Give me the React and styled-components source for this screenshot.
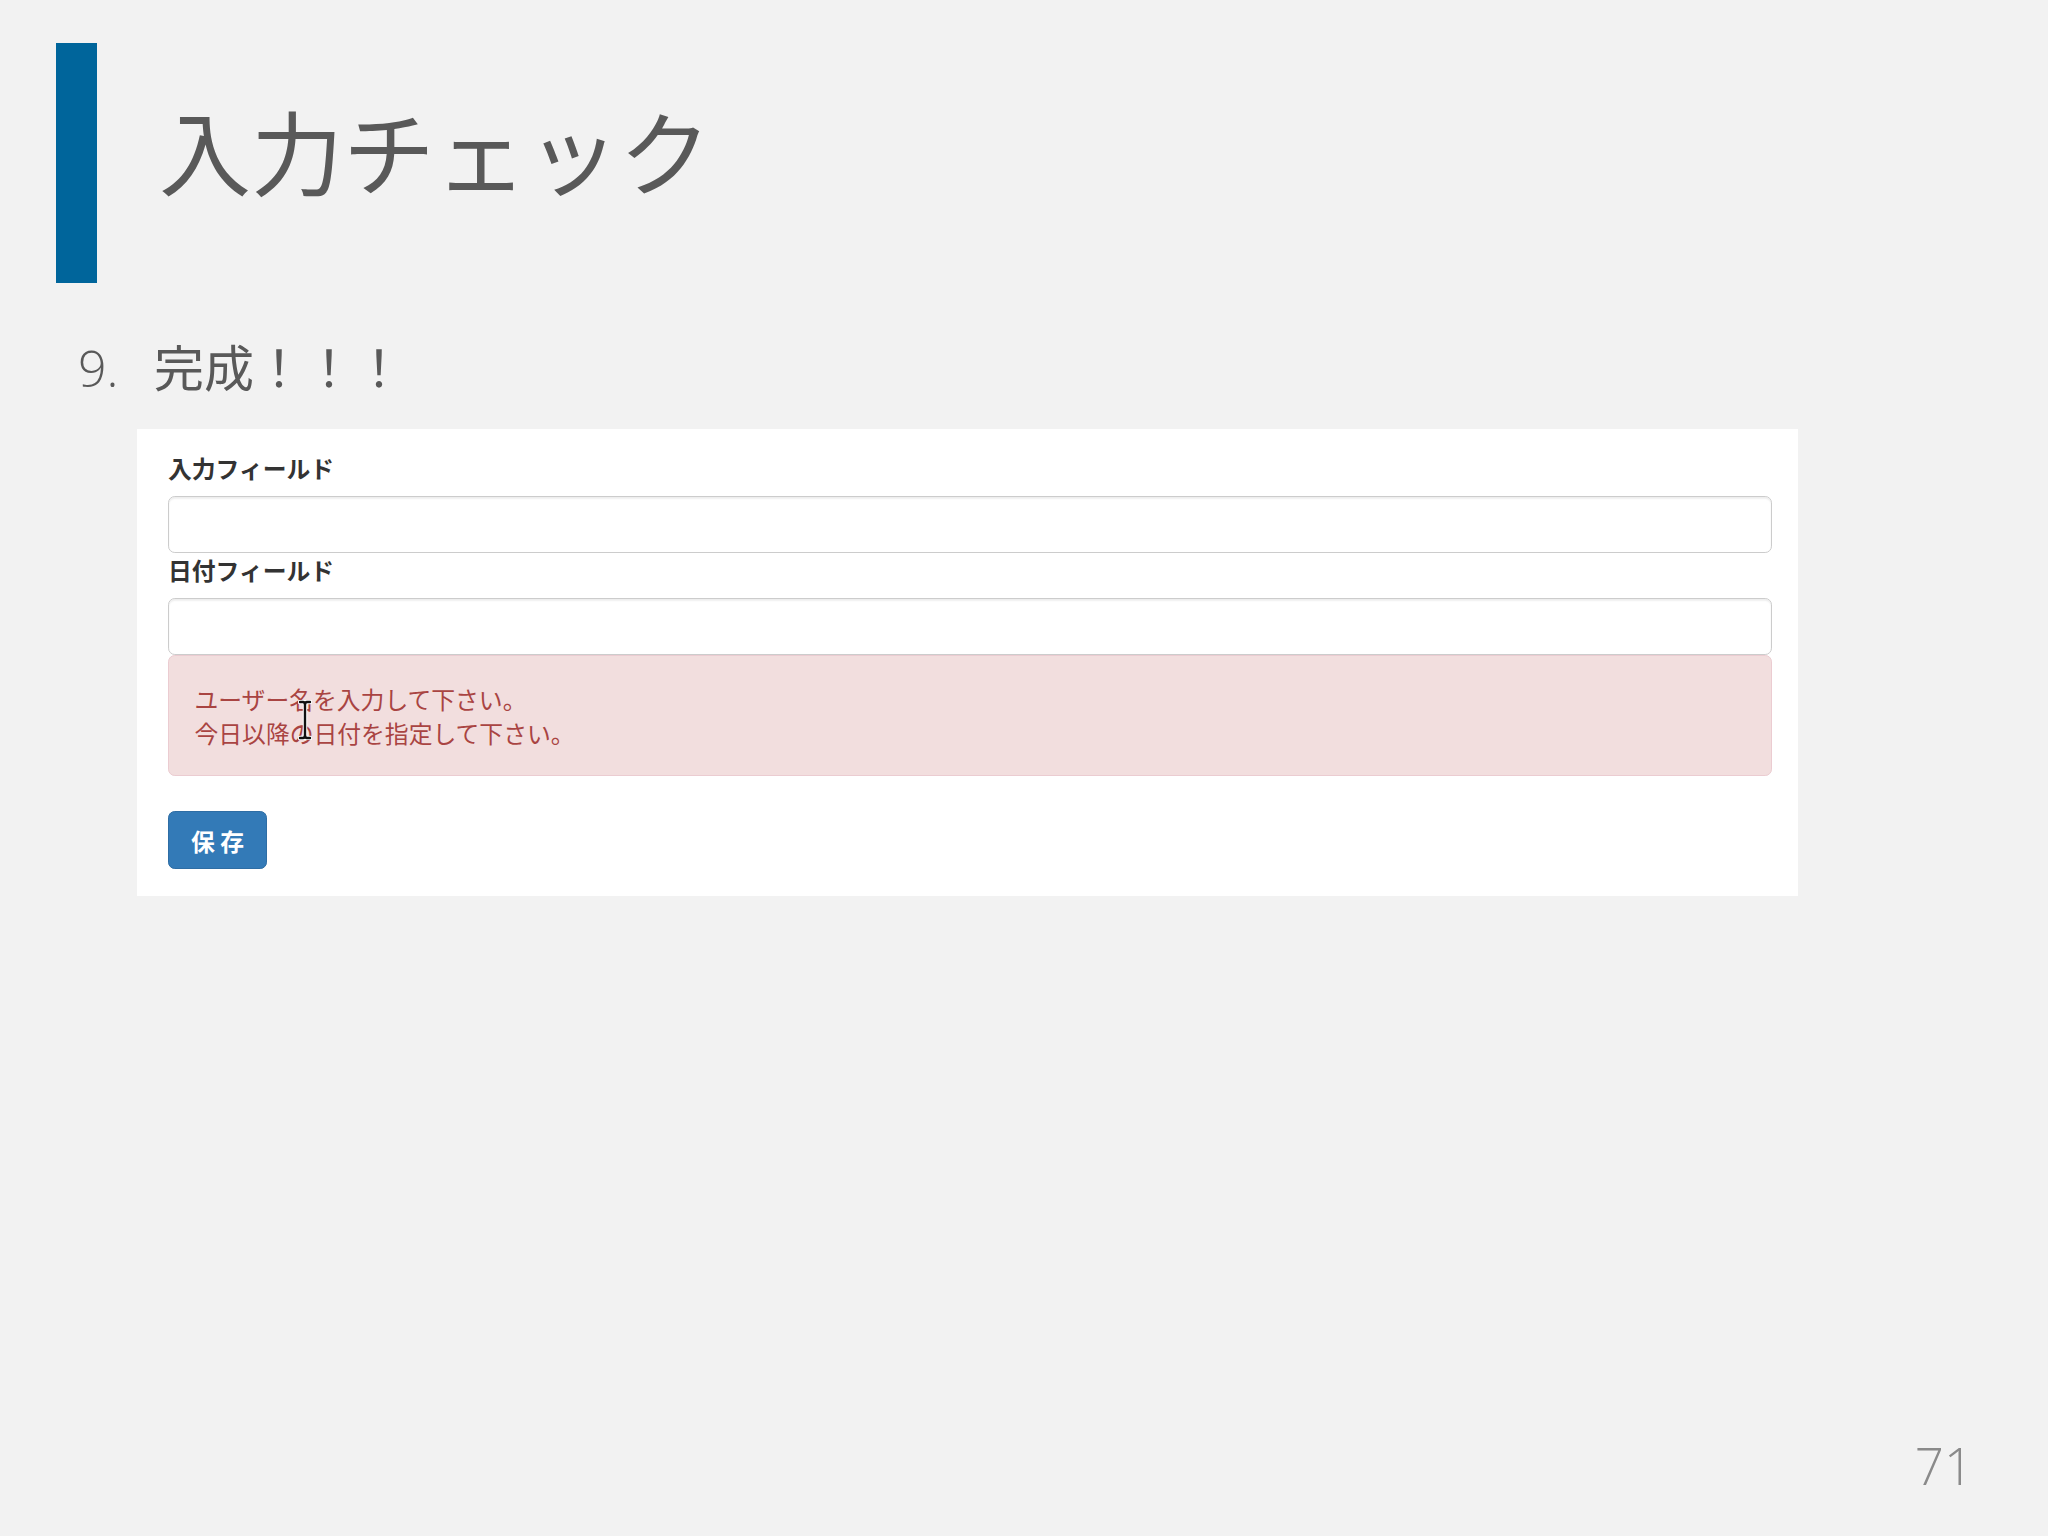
import React from "react";
import styled, { createGlobalStyle } from "styled-components";

const Global = createGlobalStyle`
  html, body { margin: 0; padding: 0; background: #f2f2f2; }
  * { box-sizing: border-box; }
`;

const JP = `"Noto Sans CJK JP", "Noto Sans", sans-serif`;

const Slide = styled.div`
  width: 2048px;
  height: 1536px;
  background: #f2f2f2;
  display: flex;
  flex-direction: column;
  padding: 43px 75px 45px 56px;
  font-family: ${JP};
`;

const Header = styled.header`
  display: flex;
  align-items: flex-start;
  gap: 62px;
`;

const AccentBar = styled.div`
  width: 41px;
  height: 240px;
  background: #00659b;
  flex: none;
`;

const Title = styled.h1`
  margin: 60px 0 0;
  font-size: 92px;
  line-height: 1;
  font-weight: 400;
  color: #595959;
  letter-spacing: 0;
`;

const Step = styled.div`
  display: flex;
  align-items: baseline;
  margin: 57px 0 0 22px;
  font-size: 50px;
  line-height: 1;
  color: #595959;
`;

const StepNum = styled.span`
  width: 76px;
  flex: none;
  font-family: "Open Sans", "Noto Sans", sans-serif;
  font-weight: 300;
`;

const StepText = styled.span``;

const Panel = styled.div`
  position: relative;
  margin: 36px 0 0 81px;
  width: 1661px;
  background: #ffffff;
  padding: 22px 26px 27px 31px;
  font-family: "Liberation Sans", ${JP};
  font-size: 23.8px;
  color: #333;
`;

const Label = styled.label`
  display: block;
  font-weight: 700;
  line-height: 34px;
  margin-bottom: 11px;
  color: #333;
  font-family: ${JP};
`;

const Input = styled.input`
  display: block;
  width: 100%;
  height: 57px;
  border: 1.7px solid #ccc;
  border-radius: 6.8px;
  background: #fff;
  box-shadow: inset 0 1.7px 1.7px rgba(0, 0, 0, 0.075);
  font-size: 23.8px;
  padding: 10px 20px;
  outline: none;
`;

const Alert = styled.div`
  background: #f2dede;
  border: 1.7px solid #ebccd1;
  border-radius: 6.8px;
  color: #a94442;
  padding: 25.5px 25.5px;
  line-height: 34px;
  font-family: ${JP};
`;

const Line = styled.div``;

const SaveButton = styled.button`
  display: block;
  margin-top: 35px;
  height: 58px;
  padding: 0 22px;
  background: #337ab7;
  border: 1.7px solid #2e6da4;
  border-radius: 6.8px;
  color: #fff;
  font-family: ${JP};
  font-size: 23.8px;
  font-weight: 700;
  cursor: pointer;
`;

const Cursor = styled.svg`
  position: absolute;
  left: 161px;
  top: 271px;
  width: 14px;
  height: 40px;
`;

const Footer = styled.div`
  margin-top: auto;
  text-align: right;
  font-family: "Open Sans", "Noto Sans", sans-serif;
  font-weight: 300;
  font-size: 51px;
  line-height: 1;
  color: #8a8a8a;
`;

export default function App() {
  return (
    <>
      <Global />
      <Slide>
        <Header>
          <AccentBar />
          <Title>入力チェック</Title>
        </Header>
        <Step>
          <StepNum>9.</StepNum>
          <StepText>完成！！！</StepText>
        </Step>
        <Panel>
          <Label>入力フィールド</Label>
          <Input type="text" />
          <Label>日付フィールド</Label>
          <Input type="text" />
          <Alert>
            <Line>ユーザー名を入力して下さい。</Line>
            <Line>今日以降の日付を指定して下さい。</Line>
          </Alert>
          <SaveButton>保 存</SaveButton>
          <Cursor viewBox="0 0 14 40">
            <path
              d="M2 2 H5 Q7 2 7 5 V35 Q7 38 5 38 H2 M12 2 H9 Q7 2 7 5 M12 38 H9 Q7 38 7 35"
              fill="none"
              stroke="#fff"
              strokeWidth="4.5"
              strokeLinecap="round"
            />
            <path
              d="M2 2 H5 Q7 2 7 5 V35 Q7 38 5 38 H2 M12 2 H9 Q7 2 7 5 M12 38 H9 Q7 38 7 35"
              fill="none"
              stroke="#111"
              strokeWidth="2.4"
              strokeLinecap="round"
            />
          </Cursor>
        </Panel>
        <Footer>71</Footer>
      </Slide>
    </>
  );
}
